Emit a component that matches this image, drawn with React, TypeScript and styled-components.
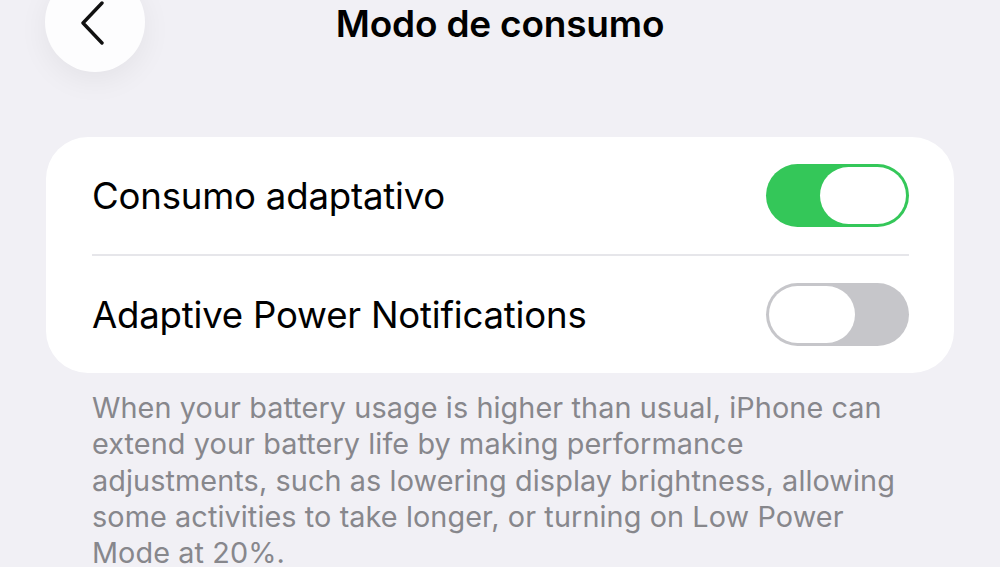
import styled, { createGlobalStyle } from "styled-components";

const GlobalStyle = createGlobalStyle`
    html, body {
        margin: 0;
        padding: 0;
        background: #f1f0f5;
        font-family: Inter, "Noto Sans", sans-serif;
        overflow: hidden;
    }
`;

const Screen = styled.div`
    width: 1000px;
    height: 567px;
    background: #f1f0f5;
    display: flex;
    flex-direction: column;
    overflow: hidden;
    & > * {
        flex-shrink: 0;
    }
`;

const Header = styled.header`
    position: relative;
    height: 137px;
    display: flex;
    justify-content: center;
`;

const BackButton = styled.button`
    position: absolute;
    left: 45px;
    top: -28px;
    width: 100px;
    height: 100px;
    border-radius: 50%;
    border: none;
    background: #fdfdfe;
    box-shadow: 0 8px 30px rgba(0, 0, 0, 0.06);
    display: flex;
    align-items: flex-end;
    justify-content: center;
    padding: 0 4px 27px 0;
`;

const Title = styled.h1`
    margin: 0;
    padding-top: 1px;
    font-size: 37px;
    font-weight: 600;
    color: #000;
    letter-spacing: -0.2px;
`;

const Card = styled.section`
    margin: 0 46px;
    background: #fff;
    border-radius: 42px;
    padding: 0 45px 0 46px;
`;

const Row = styled.div<{ $last?: boolean }>`
    height: 117px;
    display: flex;
    align-items: center;
    justify-content: space-between;
    border-bottom: ${p => (p.$last ? "none" : "2px solid #e6e6ea")};
`;

const Label = styled.span`
    font-size: 36.6px;
    color: #000;
    letter-spacing: -0.2px;
`;

const Track = styled.div<{ $on: boolean }>`
    width: 143px;
    height: 63px;
    border-radius: 32px;
    background: ${p => (p.$on ? "#34c759" : "#c6c6ca")};
    display: flex;
    align-items: center;
    justify-content: ${p => (p.$on ? "flex-end" : "flex-start")};
    padding: 0 3px;
    box-sizing: border-box;
`;

const Knob = styled.div`
    width: 86px;
    height: 57px;
    border-radius: 29px;
    background: #fff;
`;

const Footer = styled.p`
    margin: 17px 0 0 92px;
    width: 815px;
    font-size: 28.8px;
    line-height: 36.3px;
    color: #87878c;
    letter-spacing: 0.1px;
`;

const Toggle = ({ on }: { on: boolean }) => (
    <Track $on={on}>
        <Knob />
    </Track>
);

export default function App() {
    return (
        <Screen>
            <GlobalStyle />
            <Header>
                <BackButton aria-label="Atrás">
                    <svg width="26" height="44" viewBox="0 0 26 44" fill="none">
                        <path d="M22 2 L3 22 L22 42" stroke="#111" strokeWidth="3.4" strokeLinecap="round" strokeLinejoin="round" />
                    </svg>
                </BackButton>
                <Title>Modo de consumo</Title>
            </Header>
            <Card>
                <Row>
                    <Label>Consumo adaptativo</Label>
                    <Toggle on />
                </Row>
                <Row $last>
                    <Label>Adaptive Power Notifications</Label>
                    <Toggle on={false} />
                </Row>
            </Card>
            <Footer>
                When your battery usage is higher than usual, iPhone can extend your battery life by making performance adjustments, such as lowering display brightness, allowing some activities to take longer, or turning on Low Power Mode at 20%.
            </Footer>
        </Screen>
    );
}
